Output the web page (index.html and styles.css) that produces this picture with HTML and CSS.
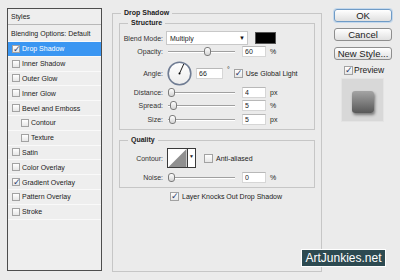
FILE: index.html
```html
<!DOCTYPE html>
<html lang="en">
<head>
    <meta charset="UTF-8">
    <title>Layer Style</title>
    <link rel="stylesheet" href="styles.css">
</head>
<body>

    <div class="dialog">
        <div class="styles">
            <div class="styles-head">Styles</div>
            <div class="style-row blending">Blending Options: Default</div>
            <div class="style-row active"><span class="cb on"></span>Drop Shadow</div>
            <div class="style-row"><span class="cb"></span>Inner Shadow</div>
            <div class="style-row"><span class="cb"></span>Outer Glow</div>
            <div class="style-row"><span class="cb"></span>Inner Glow</div>
            <div class="style-row"><span class="cb"></span>Bevel and Emboss</div>
            <div class="style-row sub"><span class="cb"></span>Contour</div>
            <div class="style-row sub"><span class="cb"></span>Texture</div>
            <div class="style-row"><span class="cb"></span>Satin</div>
            <div class="style-row"><span class="cb"></span>Color Overlay</div>
            <div class="style-row"><span class="cb on"></span>Gradient Overlay</div>
            <div class="style-row"><span class="cb"></span>Pattern Overlay</div>
            <div class="style-row"><span class="cb"></span>Stroke</div>
        </div>

        <fieldset class="group main">
            <legend>Drop Shadow</legend>

            <fieldset class="group inner structure">
                <legend>Structure</legend>
                <div class="field blend">
                    <label>Blend Mode:</label>
                    <div class="select">Multiply<span class="arrow">&#9660;</span></div>
                    <span class="swatch"></span>
                </div>
                <div class="field">
                    <label>Opacity:</label>
                    <div class="slider"><span class="thumb" style="left:54%"></span></div>
                    <input type="text" value="60"><span class="unit">%</span>
                </div>
                <div class="field angle">
                    <label>Angle:</label>
                    <svg class="dial" width="25" height="25" viewBox="0 0 25 25">
                        <defs>
                            <linearGradient id="dialFill" x1="0" y1="0" x2="0" y2="1">
                                <stop offset="0" stop-color="#ffffff"/>
                                <stop offset="1" stop-color="#ececec"/>
                            </linearGradient>
                        </defs>
                        <circle cx="12.5" cy="12.5" r="11.3" fill="url(#dialFill)" stroke="#6f7c93" stroke-width="1.6"/>
                        <line x1="12.5" y1="12.5" x2="16.8" y2="2.9" stroke="#222" stroke-width="1"/>
                        <circle cx="12.5" cy="12.5" r="1" fill="#000"/>
                    </svg>
                    <input type="text" class="wide" value="66"><span class="deg">&deg;</span>
                    <span class="cb big on"></span><span class="cb-label">Use Global Light</span>
                </div>
                <div class="field">
                    <label>Distance:</label>
                    <div class="slider"><span class="thumb" style="left:0%"></span></div>
                    <input type="text" value="4"><span class="unit">px</span>
                </div>
                <div class="field">
                    <label>Spread:</label>
                    <div class="slider"><span class="thumb" style="left:3%"></span></div>
                    <input type="text" value="5"><span class="unit">%</span>
                </div>
                <div class="field">
                    <label>Size:</label>
                    <div class="slider"><span class="thumb" style="left:2%"></span></div>
                    <input type="text" value="5"><span class="unit">px</span>
                </div>
            </fieldset>

            <fieldset class="group inner quality">
                <legend>Quality</legend>
                <div class="field contour">
                    <label>Contour:</label>
                    <div class="contour-pick">
                        <svg width="20" height="20" viewBox="0 0 20 20">
                            <rect width="20" height="20" fill="#fff"/>
                            <polygon points="0,20 20,0 20,20" fill="#8f8f8f"/>
                        </svg>
                        <span class="contour-arrow">&#9660;</span>
                    </div>
                    <span class="cb big"></span><span class="cb-label">Anti-aliased</span>
                </div>
                <div class="field noise">
                    <label>Noise:</label>
                    <div class="slider"><span class="thumb" style="left:0%"></span></div>
                    <input type="text" value="0"><span class="unit">%</span>
                </div>
            </fieldset>

            <div class="knockout"><span class="cb big on"></span><span class="cb-label">Layer Knocks Out Drop Shadow</span></div>
        </fieldset>

        <div class="actions">
            <button class="default">OK</button>
            <button>Cancel</button>
            <button>New Style...</button>
            <div class="preview-check"><span class="cb big on"></span><span>Preview</span></div>
            <div class="preview-box"><span class="preview-shape"></span></div>
        </div>
    </div>

    <div class="watermark">ArtJunkies.net</div>

</body>
</html>
```

FILE: styles.css
```css
* {
    box-sizing: border-box;
}

body {
    margin: 0;
    width: 400px;
    height: 280px;
    background-color: #ebebeb;
    font-family: 'Liberation Sans', Arial, sans-serif;
    font-size: 7px;
    color: #222;
    position: relative;
    overflow: hidden;
}

.dialog {
    display: flex;
    align-items: flex-start;
    padding: 8px 0 0 7px;
}

/* left list */
.styles {
    width: 95px;
    height: 263px;
    border: 1px solid #4d4d4d;
    background-color: #eeeeee;
}

.styles-head {
    height: 16px;
    line-height: 15px;
    padding-left: 3px;
    border-bottom: 1px solid #b8b8b8;
}

.style-row {
    display: flex;
    align-items: center;
    height: 14.8px;
    padding-left: 4px;
    border-bottom: 1px solid #f9f9f9;
}

.style-row.blending {
    height: 17px;
    padding-left: 3px;
}

.style-row.sub {
    padding-left: 13px;
}

.style-row.active {
    background-color: #3a96f2;
    color: #fff;
}

.cb {
    display: inline-block;
    position: relative;
    width: 8px;
    height: 8px;
    margin-right: 2px;
    border: 1px solid #a2a2a2;
    background: linear-gradient(#ffffff, #e6e6e6);
    flex-shrink: 0;
}

.cb.big {
    width: 9px;
    height: 9px;
}

.cb.on::after {
    content: "\2713";
    position: absolute;
    left: 0;
    top: -2px;
    font-family: 'DejaVu Sans', sans-serif;
    font-size: 9px;
    line-height: 10px;
    color: #2c3d6e;
}

/* groups */
.group {
    margin: 0;
    min-width: 0;
    border: 1px solid #c6c6c6;
}

.group legend {
    height: 10px;
    line-height: 10px;
    padding: 0 3px;
    font-weight: bold;
    color: #222;
}

.main {
    width: 210px;
    height: 264px;
    margin-left: 10px;
    padding: 0 6px;
}

.main > legend {
    margin-left: 2px;
}

.inner {
    padding: 3px 0 0;
}

.inner > legend {
    margin-left: 8px;
}

.structure {
    height: 112px;
}

.quality {
    height: 53px;
    margin-top: 5px;
}

.field {
    display: flex;
    align-items: center;
    height: 13.5px;
}

.field label {
    width: 43px;
    margin-right: 3px;
    text-align: right;
    color: #333;
}

.field.blend {
    height: 14px;
}

.field.angle {
    height: 24px;
    margin-top: 3px;
}

.select {
    display: flex;
    justify-content: space-between;
    align-items: center;
    width: 82px;
    height: 14px;
    padding: 0 2px 0 3px;
    background-color: #fff;
    border: 1px solid #c8c8c8;
}

.arrow {
    font-size: 6px;
    color: #111;
}

.swatch {
    width: 21px;
    height: 12px;
    margin-left: 7px;
    background-color: #000;
    border: 1px solid #555;
}

.slider {
    position: relative;
    width: 67px;
    height: 1px;
    margin-left: 2px;
    background-color: #a0a0a0;
    box-shadow: 0 1px 0 #fff;
}

.thumb {
    position: absolute;
    top: -4px;
    width: 7px;
    height: 9px;
    border: 1px solid #7c7c7c;
    border-radius: 3px;
    background: linear-gradient(#ffffff, #d4d4d4);
}

input[type="text"] {
    width: 24px;
    height: 11px;
    margin: 0 0 0 7px;
    padding: 0 2px;
    border: 1px solid #d6d6d6;
    border-top-color: #b8b8b8;
    background-color: #fff;
    font-family: 'Liberation Sans', Arial, sans-serif;
    font-size: 7px;
    color: #222;
}

input.wide {
    width: 27px;
    margin-left: 4px;
}

.unit {
    margin-left: 4px;
}

.dial {
    margin-left: 1px;
}

.deg {
    align-self: flex-start;
    margin: 4px 0 0 4px;
}

.angle .cb {
    margin-left: 4px;
}

.cb-label {
    margin-left: 1px;
}

.contour {
    height: 20px;
}

.contour-pick {
    display: flex;
    height: 20px;
    margin-left: 1px;
    border: 1px solid #3a3a3a;
    background-color: #fff;
}

.contour-pick svg {
    display: block;
    width: 19px;
    height: 18px;
}

.contour-arrow {
    width: 8px;
    border-left: 1px solid #3a3a3a;
    font-size: 5px;
    line-height: 14px;
    text-align: center;
}

.contour .cb {
    margin-left: 8px;
}

.noise {
    height: 12px;
    margin-top: 3px;
}

.knockout {
    display: flex;
    align-items: center;
    height: 10px;
    margin: 3px 0 0 51px;
}

/* buttons */
.actions {
    display: flex;
    flex-direction: column;
    width: 58px;
    margin: 1px 0 0 12px;
}

button {
    height: 13px;
    margin-bottom: 6px;
    padding: 0;
    border: 1px solid #8e8e8e;
    border-radius: 3px;
    background: linear-gradient(#ffffff, #e0e0e0);
    font-family: 'Liberation Sans', Arial, sans-serif;
    font-size: 9.5px;
    line-height: 11px;
    color: #222;
}

button.default {
    border-color: #6f9bc6;
    box-shadow: 0 0 0 1px #c4d8ec;
}

.preview-check {
    display: flex;
    align-items: center;
    height: 10px;
    margin: -1px 0 0 10px;
    font-size: 8.5px;
}

.preview-check .cb {
    margin-right: 1px;
}

.preview-box {
    display: flex;
    justify-content: center;
    align-items: center;
    width: 43px;
    height: 44px;
    margin: 3px 0 0 7px;
    padding-top: 3px;
    background-color: #d8d8d8;
    border: 1px solid #e4e4e4;
}

.preview-shape {
    width: 22px;
    height: 22px;
    border-radius: 3px;
    background: linear-gradient(#a4a4a4, #585858);
    box-shadow: 1px 2px 3px rgba(0, 0, 0, 0.45);
}

/* watermark over the corner */
.watermark {
    position: absolute;
    right: 14px;
    bottom: 13px;
    width: 85px;
    height: 18px;
    background-color: #2d4a51;
    border: 1px solid #fff;
    color: #fff;
    font-size: 12px;
    line-height: 16px;
    text-align: center;
}
```
